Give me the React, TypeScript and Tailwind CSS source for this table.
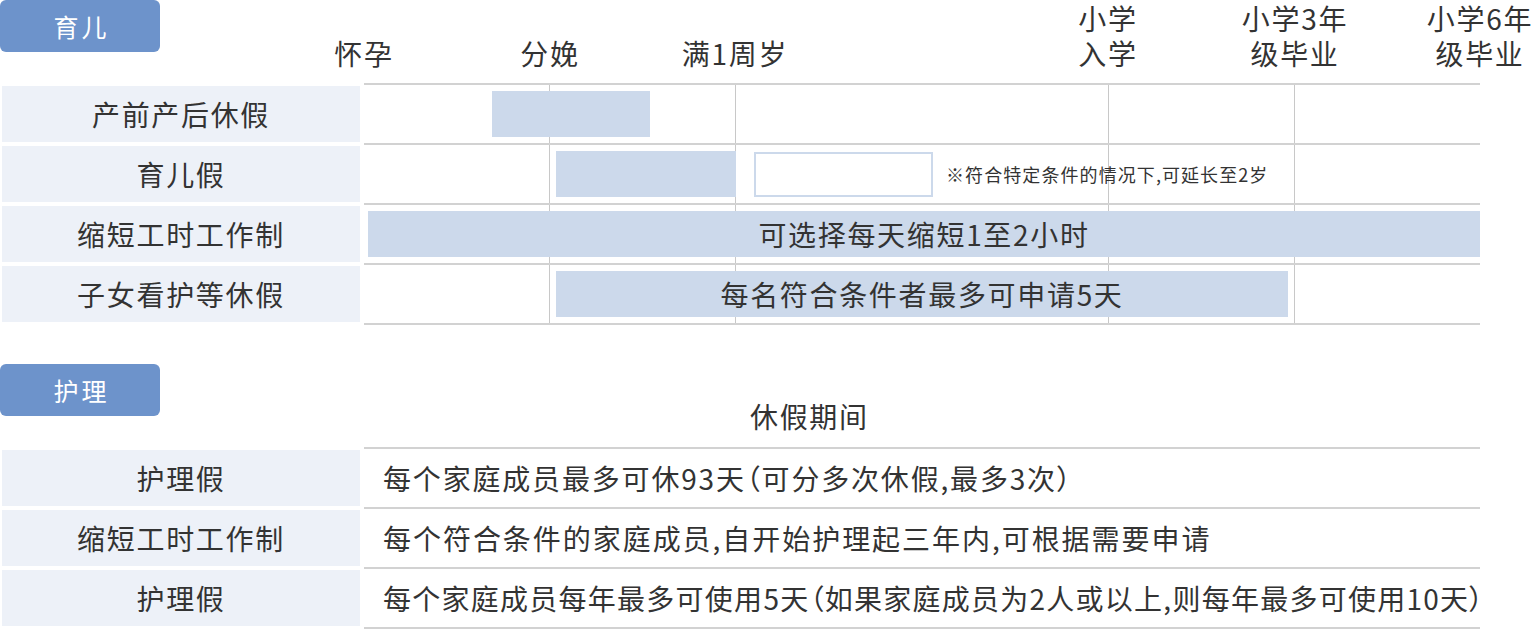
const marks = [
  { lines: ["怀孕"], pos: "left-0" },
  { lines: ["分娩"], pos: "left-[186px]" },
  { lines: ["满1周岁"], pos: "left-[371px]" },
  { lines: ["小学", "入学"], pos: "left-[744px]" },
  { lines: ["小学3年", "级毕业"], pos: "left-[931px]" },
  { lines: ["小学6年", "级毕业"], pos: "left-[1116px]" },
];

const gridLines = ["left-[185px]", "left-[371px]", "left-[744px]", "left-[930px]"];

const careRows = [
  { label: "护理假", text: "每个家庭成员最多可休93天（可分多次休假,最多3次）", track: "tracking-[0.065em]" },
  { label: "缩短工时工作制", text: "每个符合条件的家庭成员,自开始护理起三年内,可根据需要申请", track: "tracking-[0.07em]" },
  { label: "护理假", text: "每个家庭成员每年最多可使用5天（如果家庭成员为2人或以上,则每年最多可使用10天）", track: "tracking-[0.045em]" },
];

const Tab = ({ children }: { children: string }) => (
  <div className="flex h-[52px] w-[160px] shrink-0 items-center justify-center rounded-[6px] bg-[#6d93cb] pl-[3px] text-[25px] leading-none tracking-[3px] text-white">
    {children}
  </div>
);

const LabelCell = ({ children }: { children: string }) => (
  <div className="flex h-[56px] w-[358px] items-center justify-center bg-[#edf1f8] leading-none">
    {children}
  </div>
);

const Bar = ({ pos, children }: { pos: string; children?: string }) => (
  <div
    className={`absolute top-[6px] z-10 flex h-[46px] items-center justify-center bg-[#ccd9eb] leading-none ${pos}`}
  >
    {children}
  </div>
);

const App = () => {
  return (
    <div className="h-[630px] w-[1532px] overflow-hidden bg-white font-['Noto_Sans_CJK_SC','Noto_Sans',sans-serif] text-[28px] tracking-[0.06em] text-[#333]">
      {/* childcare */}
      <div className="relative h-[83px]">
        <Tab>育儿</Tab>
        <div className="absolute left-[364px] top-0 h-full w-[1116px]">
          {marks.map((m) => (
            <div
              key={m.lines.join("")}
              className={`absolute bottom-[12px] -translate-x-1/2 whitespace-nowrap text-center leading-[35px] ${m.pos}`}
            >
              {m.lines.length > 1 ? (
                <>
                  {m.lines[0]}
                  <br />
                  {m.lines[1]}
                </>
              ) : (
                m.lines[0]
              )}
            </div>
          ))}
        </div>
      </div>

      <div className="flex">
        <div className="ml-[2px] flex flex-col gap-[4px] pt-[3px]">
          <LabelCell>产前产后休假</LabelCell>
          <LabelCell>育儿假</LabelCell>
          <LabelCell>缩短工时工作制</LabelCell>
          <LabelCell>子女看护等休假</LabelCell>
        </div>
        <div className="relative ml-[4px] w-[1116px] border-t-2 border-[#d2d2d2]">
          {gridLines.map((g) => (
            <div key={g} className={`absolute top-0 bottom-0 w-px bg-[#c8c8c8] ${g}`} />
          ))}
          <div className="relative h-[60px] border-b-2 border-[#d2d2d2]">
            <Bar pos="left-[128px] w-[158px]" />
          </div>
          <div className="relative h-[60px] border-b-2 border-[#d2d2d2]">
            <Bar pos="left-[192px] w-[180px]" />
            <div className="absolute left-[390px] top-[7px] z-10 h-[45px] w-[179px] border-2 border-[#ccd9eb] bg-white" />
            <div className="absolute left-[582px] top-0 flex h-full items-center text-[18px] leading-none tracking-[0.06em]">
              ※符合特定条件的情况下,可延长至2岁
            </div>
          </div>
          <div className="relative h-[60px] border-b-2 border-[#d2d2d2]">
            <Bar pos="left-[4px] w-[1112px]">可选择每天缩短1至2小时</Bar>
          </div>
          <div className="relative h-[60px] border-b-2 border-[#d2d2d2]">
            <Bar pos="left-[192px] w-[732px]">每名符合条件者最多可申请5天</Bar>
          </div>
        </div>
      </div>

      {/* nursing care */}
      <div className="mt-[39px] flex h-[83px]">
        <Tab>护理</Tab>
        <div className="self-end pb-[12px] pl-[590px] leading-[38px]">休假期间</div>
      </div>
      <div className="flex">
        <div className="ml-[2px] flex flex-col gap-[4px] pt-[3px]">
          {careRows.map((r, i) => (
            <LabelCell key={i}>{r.label}</LabelCell>
          ))}
        </div>
        <div className="ml-[4px] w-[1116px] border-t-2 border-[#d2d2d2]">
          {careRows.map((r, i) => (
            <div
              key={i}
              className={`flex h-[60px] items-center whitespace-nowrap border-b-2 border-[#d2d2d2] pl-[19px] leading-none [font-feature-settings:'palt'] ${r.track}`}
            >
              {r.text}
            </div>
          ))}
        </div>
      </div>
    </div>
  );
};

export default App;
